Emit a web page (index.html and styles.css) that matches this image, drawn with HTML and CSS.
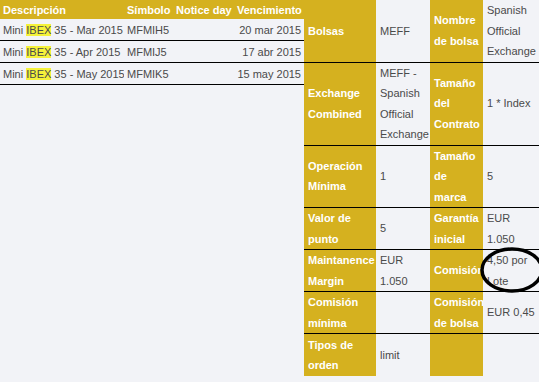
FILE: index.html
```html
<!DOCTYPE html>
<html>
<head>
<meta charset="utf-8">
<link rel="stylesheet" href="styles.css">
</head>
<body>
<div class="page">
  <table class="contracts">
    <colgroup>
      <col class="k1"><col class="k2"><col class="k3"><col class="k4">
    </colgroup>
    <thead>
      <tr>
        <th>Descripción</th>
        <th>Símbolo</th>
        <th>Notice day</th>
        <th class="num">Vencimiento</th>
      </tr>
    </thead>
    <tbody>
      <tr>
        <td>Mini <span class="hl">IBEX</span> 35 - Mar 2015</td>
        <td>MFMIH5</td>
        <td></td>
        <td class="num">20 mar 2015</td>
      </tr>
      <tr>
        <td>Mini <span class="hl">IBEX</span> 35 - Apr 2015</td>
        <td>MFMIJ5</td>
        <td></td>
        <td class="num">17 abr 2015</td>
      </tr>
      <tr>
        <td>Mini <span class="hl">IBEX</span> 35 - May 2015</td>
        <td>MFMIK5</td>
        <td></td>
        <td class="num">15 may 2015</td>
      </tr>
    </tbody>
  </table>

  <div class="details-wrap">
    <table class="details">
      <colgroup>
        <col class="w1"><col class="w2"><col class="w3"><col class="w4">
      </colgroup>
      <tr>
        <th>Bolsas</th><td>MEFF</td>
        <th>Nombre de bolsa</th><td>Spanish Official Exchange</td>
      </tr>
      <tr>
        <th>Exchange Combined</th><td>MEFF - Spanish Official Exchange</td>
        <th>Tamaño del Contrato</th><td>1 * Index</td>
      </tr>
      <tr>
        <th>Operación Mínima</th><td>1</td>
        <th>Tamaño de marca</th><td>5</td>
      </tr>
      <tr>
        <th>Valor de punto</th><td>5</td>
        <th>Garantía inicial</th><td>EUR 1.050</td>
      </tr>
      <tr>
        <th>Maintanence Margin</th><td>EUR 1.050</td>
        <th class="clip">Comisión</th><td>4,50 por Lote</td>
      </tr>
      <tr>
        <th>Comisión mínima</th><td></td>
        <th>Comisión de bolsa</th><td>EUR 0,45</td>
      </tr>
      <tr class="last">
        <th>Tipos de orden</th><td>limit</td>
        <th></th><td></td>
      </tr>
    </table>
    <svg class="circle" width="70" height="50" viewBox="0 0 70 50">
      <ellipse cx="33" cy="23" rx="30" ry="21" fill="none" stroke="#000" stroke-width="3.5"/>
    </svg>
  </div>
</div>
</body>
</html>
```

FILE: styles.css
```css
html, body {
  margin: 0;
  padding: 0;
  background: #f2f3f7;
}
body {
  font-family: "Liberation Sans", Arial, sans-serif;
  font-size: 11px;
  color: #4a4a4a;
  overflow: hidden;
}
.page {
  display: flex;
  align-items: flex-start;
  width: 539px;
  height: 382px;
}
table {
  border-collapse: collapse;
  border-spacing: 0;
}
.contracts {
  width: 304px;
  flex: none;
  table-layout: fixed;
}
.k1 { width: 124px; }
.k2 { width: 49px; }
.k3 { width: 61px; }
.k4 { width: 70px; }
.contracts th {
  background: #d5b11f;
  color: #fff;
  font-weight: bold;
  text-align: left;
  height: 19px;
  padding: 0 3px;
  white-space: nowrap;
  overflow: hidden;
}
.contracts td {
  height: 21px;
  padding: 0 3px;
  border-bottom: 1px solid #000;
  white-space: nowrap;
  overflow: hidden;
}
.contracts .num { text-align: right; }
.hl { background: #f5f23a; }

.details-wrap {
  position: relative;
  width: 235px;
  flex: none;
}
.details {
  width: 235px;
  table-layout: fixed;
  line-height: 20.5px;
}
.w1 { width: 72px; }
.w2 { width: 54px; }
.w3 { width: 53px; }
.w4 { width: 56px; }
.details th, .details td {
  padding: 0 2px 0 4px;
  border-bottom: 1px solid #000;
  text-align: left;
  vertical-align: middle;
  overflow: hidden;
}
.details th {
  background: #d5b11f;
  color: #fff;
  font-weight: bold;
}
.details tr.last th, .details tr.last td { border-bottom: none; height: 42px; }
.details th.clip { white-space: nowrap; padding-right: 0; }
.circle {
  position: absolute;
  left: 175px;
  top: 247px;
}
```
